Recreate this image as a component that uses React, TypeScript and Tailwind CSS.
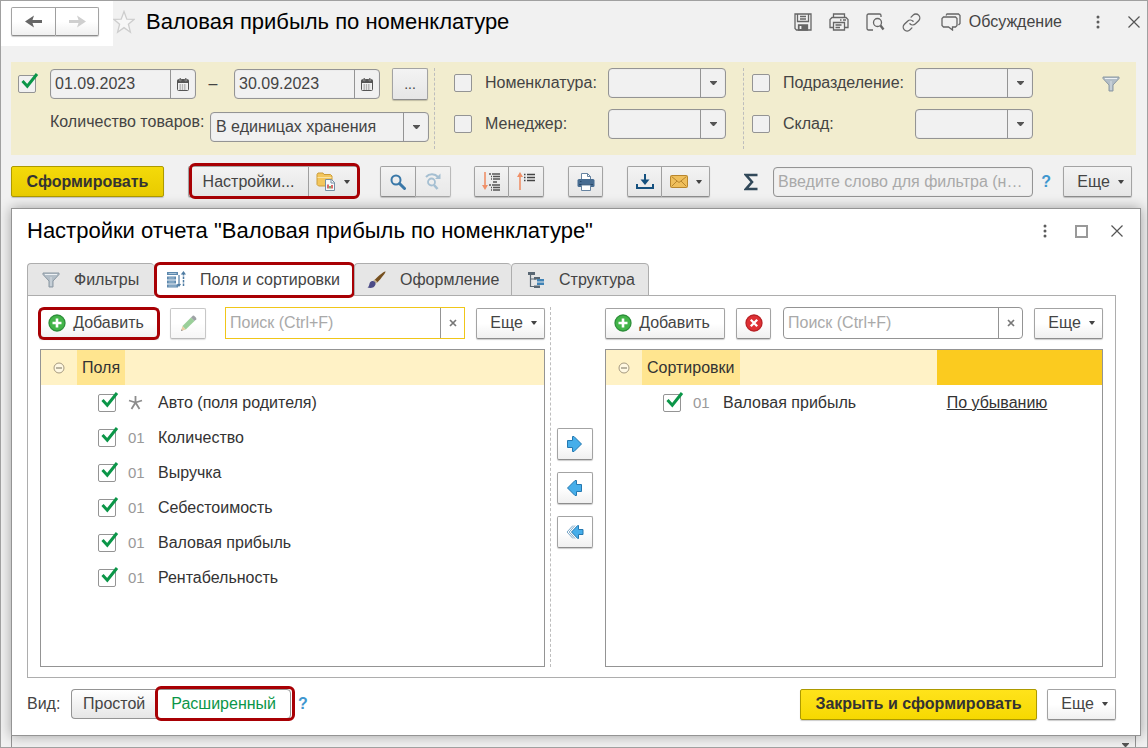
import { useState } from 'react';
import type { ReactNode } from 'react';
import clsx from 'clsx';

const buttonBase =
  'flex shrink-0 items-center justify-center border border-[#a3a3a3] border-b-[#8d8d8d] shadow-[0_1px_1px_#0003]';
const greyFill = 'bg-linear-to-b from-[#f3f3f3] to-[#e6e6e6]';
const whiteFill = 'bg-linear-to-b from-white from-50% to-[#f0f0f0]';

const fields = [
  { name: 'Авто (поля родителя)', auto: true },
  { name: 'Количество' },
  { name: 'Выручка' },
  { name: 'Себестоимость' },
  { name: 'Валовая прибыль' },
  { name: 'Рентабельность' },
];

const Caret = () => (
  <svg className="shrink-0" width="6" height="4" viewBox="0 0 6 4">
    <path d="M0 0h6L3.6 3.4H2.4z" fill="#444" />
  </svg>
);

const SelectCaret = () => (
  <svg width="7" height="4" viewBox="0 0 7 4">
    <path d="M0 0h7v.8L4 4H3L0 .8z" fill="#555" />
  </svg>
);

const Dots = () => (
  <svg width="4" height="14" viewBox="0 0 4 14" fill="#5c5c5c">
    <circle cx="2" cy="2" r="1.5" />
    <circle cx="2" cy="7" r="1.5" />
    <circle cx="2" cy="12" r="1.5" />
  </svg>
);

const Cross = () => (
  <svg width="12" height="12" viewBox="0 0 12 12" stroke="#555" strokeWidth="1.2">
    <path d="M.5.5l11 11M11.5.5l-11 11" />
  </svg>
);

const SmallCross = () => (
  <svg width="8" height="8" viewBox="0 0 8 8" stroke="#777" strokeWidth="1.7">
    <path d="M1 1l6 6M7 1L1 7" />
  </svg>
);

const ArrowIcon = ({ forward }: { forward?: boolean }) => (
  <svg width="17" height="13" viewBox="0 0 17 13">
    {forward ? (
      <path d="M0 5h9.5L8 .5l9 6-9 6L9.5 8H0z" fill="#cfcfcf" />
    ) : (
      <path d="M17 5H7.5L9 .5l-9 6 9 6L7.5 8H17z" fill="#666" />
    )}
  </svg>
);

const StarIcon = () => (
  <svg width="22" height="24" viewBox="0 0 22 24" fill="#f7f7f7" stroke="#cdcdcd" strokeWidth="1.3">
    <path d="M11 1.5l2.8 7.6 7.4.2-5.8 4.9 2 8L11 17.6l-6.4 4.6 2-8L.8 9.3l7.4-.2z" />
  </svg>
);

const CalendarIcon = () => (
  <svg width="12" height="13" viewBox="0 0 12 13">
    <rect x=".5" y="1.5" width="11" height="11" rx="1" fill="#f1f1f1" stroke="#555" />
    <path d="M.5 2h11v3H.5z" fill="#555" />
    <path d="M2.5 0H4v3H2.5zM8 0h1.5v3H8z" fill="#555" stroke="#ddd" strokeWidth=".3" />
    <path d="M2.5 7h7M2.5 9h7M2.5 11h7" stroke="#777" strokeDasharray="1.4 .9" />
  </svg>
);

const FunnelIcon = () => (
  <svg width="18" height="16" viewBox="0 0 18 16">
    <path d="M1 1h16v1.5L11 9v6H7V9L1 2.5z" fill="#b3bec7" stroke="#8b98a3" strokeLinejoin="round" />
    <path d="M3 2.5h12" stroke="#edf1f4" />
    <path d="M9 5v9" stroke="#d8dfe5" />
  </svg>
);

const SaveIcon = () => (
  <svg width="18" height="18" viewBox="0 0 18 18" fill="none" stroke="#666" strokeWidth="1.3">
    <path d="M1 1h16v16H2.5L1 15.5z" />
    <path d="M3.5 1v7.5h11V1M6 3.5h6M6 6h6" />
    <path d="M4.5 17v-5h9v5z" fill="#666" />
    <path d="M6.5 13v3" stroke="#f1f1f1" strokeWidth="1.8" />
  </svg>
);

const PrintOutlineIcon = () => (
  <svg width="20" height="18" viewBox="0 0 20 18" fill="none" stroke="#666" strokeWidth="1.3">
    <path d="M4.5 4.5V1h11v3.5M4.5 14.5H1v-8l2-2h14l2 2v8h-3.5" />
    <path d="M4.5 9.5h11V17h-11zM6.5 12h6M6.5 14.5H11M14 7h3M11 7h1.5" />
  </svg>
);

const PreviewIcon = () => (
  <svg width="19" height="18" viewBox="0 0 19 18" fill="none" stroke="#666" strokeWidth="1.3">
    <path d="M7 17H2.5A1.5 1.5 0 011 15.5v-13A1.5 1.5 0 012.5 1h11A1.5 1.5 0 0115 2.5V4" />
    <circle cx="11.5" cy="9.5" r="4" />
    <path d="M14.5 12.5l3 4" strokeWidth="2.4" />
  </svg>
);

const LinkIcon = () => (
  <svg width="19" height="19" viewBox="0 0 24 24" fill="none" stroke="#666" strokeWidth="1.7" strokeLinecap="round">
    <path d="M10 13.5a5 5 0 007 .2l4-4a4.900 4.900 0 00-7-7l-2.500 2.500" />
    <path d="M14 10.5a5 5 0 00-7-.2l-4 4a4.900 4.900 0 007 7l2.500-2.500" />
  </svg>
);

const ChatIcon = () => (
  <svg width="20" height="18" viewBox="0 0 20 18" fill="none" stroke="#666" strokeWidth="1.3">
    <path d="M5 2.5L6 1h11.5L19 2.5v8L17.5 12" />
    <path d="M2.5 4h12L16 5.5v7L14.5 14h-3v3l-4-3h-5L1 12.5v-7z" />
  </svg>
);

const FolderReportIcon = () => (
  <svg width="20" height="19" viewBox="0 0 20 19">
    <path d="M1 2.5L2 1h5l1 1.5h6.5L16 4v10H2.5L1 12.5z" fill="#f3c65c" stroke="#cb9c3a" />
    <path d="M1.5 5.5h14" stroke="#fbe3a2" />
    <path d="M9.5 7.5h6l3 3v8h-9z" fill="#f7fafc" stroke="#758ea3" />
    <path d="M15 7.5V11h3.5" fill="none" stroke="#758ea3" />
    <path d="M12 12.5v4M16 13v3.5" stroke="#cf3d3d" strokeWidth="1.5" />
    <path d="M14 14v2.5" stroke="#4b9d45" strokeWidth="1.5" />
  </svg>
);

const SearchIcon = () => (
  <svg width="16" height="16" viewBox="0 0 16 16" fill="none" stroke="#3a78a8">
    <circle cx="6" cy="6" r="4.5" strokeWidth="2" />
    <path d="M9.5 9.5l5 5" strokeWidth="3" strokeLinecap="round" />
  </svg>
);

const SearchAgainIcon = () => (
  <svg width="17" height="17" viewBox="0 0 17 17" fill="none" stroke="#86abc5">
    <circle cx="6.5" cy="9" r="3.5" strokeWidth="1.8" />
    <path d="M9 12l3.5 4" strokeWidth="2.5" />
    <path d="M1 4c3.5-4 9-3.5 12 0" strokeWidth="2" />
    <path d="M15.5.5V6H10z" fill="#86abc5" stroke="none" />
  </svg>
);

const ExpandIcon = () => (
  <svg width="19" height="19" viewBox="0 0 19 19">
    <path d="M3 0v15" stroke="#ef9068" strokeWidth="1.6" />
    <path d="M0 13h6l-3 5z" fill="#ef9068" />
    <path
      d="M7 2h2M10 2h8M9 4.5h1M11 4.5h7M9 7h1M11 7h7M11 10h4M7 13h2M10 13h8M9 15.5h1M11 15.5h7M9 18h1M11 18h7"
      stroke="#555"
      strokeWidth="1.3"
    />
  </svg>
);

const CollapseIcon = () => (
  <svg width="19" height="19" viewBox="0 0 19 19">
    <path d="M3 4v14" stroke="#ef9068" strokeWidth="1.6" />
    <path d="M0 5h6L3 0z" fill="#ef9068" />
    <path d="M7 2.5h1.5M10 2.5h8M7 5.5h1.5M10 5.5h8M7 8.5h1.5M10 8.5h8" stroke="#444" strokeWidth="1.3" />
  </svg>
);

const PrintIcon = () => (
  <svg width="18" height="18" viewBox="0 0 18 18">
    <path d="M4.5 7V.5h6l3 3V7" fill="#fff" stroke="#6683a0" />
    <path d="M10.5.5v3h3" fill="none" stroke="#6683a0" />
    <rect x=".5" y="6" width="17" height="8" rx="1.5" fill="#476c91" />
    <path d="M3 8.5h1.5M2 11.5h14" stroke="#294a6b" />
    <path d="M4.5 12h9v5.5h-9z" fill="#fff" stroke="#6683a0" />
  </svg>
);

const DownloadIcon = () => (
  <svg width="18" height="16" viewBox="0 0 18 16">
    <path d="M9 0v7" stroke="#14507e" strokeWidth="2" />
    <path d="M4.5 5.5h9L9 11z" fill="#14507e" />
    <path d="M1 10v4h16v-4" fill="none" stroke="#14507e" strokeWidth="2" />
  </svg>
);

const MailIcon = () => (
  <svg width="18" height="13" viewBox="0 0 18 13" stroke="#b8862d">
    <rect x=".5" y=".5" width="17" height="12" rx="1" fill="#efbf5c" />
    <path d="M1.5 1.5l7.5 6 7.5-6M1.5 11.5L7 6M16.5 11.5L11 6" fill="none" />
  </svg>
);

const SigmaIcon = () => (
  <svg width="14" height="18" viewBox="0 0 14 18" fill="none" stroke="#32495a" strokeWidth="2.6">
    <path d="M13.5 2H2l6 7-6 7h11.5" />
  </svg>
);

const FieldsIcon = () => (
  <svg className="shrink-0" width="19" height="17" viewBox="0 0 19 17">
    <path d="M0 1h11v3H0zM0 5.5h9v3H0zM0 9.5h9v3H0zM0 13.5h11v3H0z" fill="#5c88ad" />
    <path d="M1.5 2.5h8M1.5 7h6M1.5 11h6M1.5 15h8" stroke="#a9c3d8" />
    <path d="M12 4v11M10.5 13l1.5 2 1.5-2" fill="none" stroke="#4e7ba2" strokeWidth="1.2" />
    <path d="M16.5 2v14" fill="none" stroke="#4e7ba2" strokeWidth="1.5" strokeDasharray="2.5 1" />
    <path d="M13.8 3.5L16.5 0 19 3.5z" fill="#4e7ba2" />
  </svg>
);

const BrushIcon = () => (
  <svg className="shrink-0" width="19" height="18" viewBox="0 0 19 18">
    <path d="M18.5.5c.8.8-7 10-8.5 11L7.5 9C9 7 17.500-.5 18.5.5z" fill="#76501f" />
    <path d="M7.5 8.5l3 2.5L9 12.5 6 10z" fill="#c5b390" />
    <path d="M6 10c2 .2 3 2 2.5 3.500C7.500 17 3.500 17.500.5 16.500c2-1.500 1.500-3 2.200-4.500C3.400 10.500 4.500 10 6 10z" fill="#4c4c87" />
  </svg>
);

const StructureIcon = () => (
  <svg className="shrink-0" width="17" height="18" viewBox="0 0 17 18">
    <path d="M0 1h7v3H0z" fill="#596773" />
    <path d="M2.5 4v11.5H8M2.5 8H8" fill="none" stroke="#596773" strokeWidth="1.2" />
    <path d="M6 6h6v2.5H6zM6 14.5h6V17H6z" fill="#596773" />
    <path d="M9 8h7v2.5H9zM9 11.5h7V14H9z" fill="#4083b6" />
  </svg>
);

const PlusIcon = () => (
  <svg className="shrink-0" width="18" height="18" viewBox="0 0 18 18">
    <circle cx="9" cy="9" r="8" fill="#43b549" stroke="#2d8f3a" strokeWidth="1.3" />
    <path d="M9 4.5v9M4.5 9h9" stroke="#fff" strokeWidth="2.6" />
  </svg>
);

const DeleteIcon = () => (
  <svg width="18" height="18" viewBox="0 0 18 18">
    <circle cx="9" cy="9" r="8" fill="#de3034" stroke="#b92226" strokeWidth="1.3" />
    <path d="M5.8 5.8l6.4 6.4M12.2 5.8l-6.4 6.4" stroke="#fff" strokeWidth="2.3" />
  </svg>
);

const PencilIcon = () => (
  <svg width="17" height="17" viewBox="0 0 17 17">
    <path d="M1 16l1.5-5 3.3 3.5z" fill="#d9ac66" />
    <path d="M1 16l.5-1.8 1.3 1.3z" fill="#444" />
    <path d="M2.5 11L11 2.5 14.5 6l-8.700 8.500z" fill="#58b056" />
    <path d="M11 2.5L12.8.7c.8-.8 4.2 2.5 3.5 3.500L14.500 6z" fill="#5f656b" />
  </svg>
);

const MoveIcon = ({ kind }: { kind: 'right' | 'left' | 'all' }) => (
  <svg width="18" height="18" viewBox="0 0 18 18" fill="#46aeea" stroke="#2478b0" strokeLinejoin="round">
    {kind === 'right' && <path d="M1.5 5.5h5v-4H8L15.5 9 8 16.5H6.5v-4h-5z" />}
    {kind === 'left' && <path d="M15.5 5.5h-5v-4H9L1.5 9 9 16.5h1.5v-4h5z" />}
    {kind === 'all' && (
      <>
        <path d="M17 6.5h-4.5v-4h-.8L5.5 9l6.2 6.5h.8v-4H17z" />
        <path d="M7 2.5L1 9l6 6.5M9 2.5L3.2 9 9 15.5" fill="none" stroke="#6a9cc0" strokeWidth=".9" />
      </>
    )}
  </svg>
);

const CollapseNodeIcon = () => (
  <svg width="12" height="12" viewBox="0 0 12 12" fill="#fff8e2" stroke="#a69a80">
    <circle cx="6" cy="6" r="5" />
    <path d="M3 6h6" stroke="#77705f" />
  </svg>
);

const AutoIcon = () => (
  <svg width="15" height="15" viewBox="0 0 15 15" stroke="#8c8c8c" strokeWidth="1.8">
    <path d="M7.5 1v6.5M1 5.5l6.5 2M14 5.5l-6.5 2M3.5 14l4-6.5M11.5 14l-4-6.5" />
  </svg>
);

/* red frame drawn over the control the reader should press */
const Highlight = ({ className }: { className: string }) => (
  <span className={clsx('pointer-events-none absolute rounded-md border-3 border-[#a80004]', className)} />
);

const Tick = ({ checked, label }: { checked?: boolean; label?: string }) => (
  <span className="relative flex size-[18px] shrink-0">
    <input
      type="checkbox"
      defaultChecked={checked}
      aria-label={label}
      className={clsx(
        'peer size-[18px] appearance-none rounded-xs border border-[#949494]',
        label ? 'bg-[#f1f1f1]' : 'bg-white',
      )}
    />
    <svg
      className="pointer-events-none absolute -top-[2px] left-[3px] hidden peer-checked:block"
      width="18"
      height="16"
      viewBox="0 0 18 16"
      fill="none"
      stroke="#0b9648"
      strokeWidth="3"
    >
      <path d="M1.5 8l4.8 5.2L16 1" />
    </svg>
  </span>
);

const DateField = ({ label, value }: { label: string; value: string }) => (
  <div className="flex h-[30px] w-[146px] rounded-sm border border-[#949494] bg-[#f1f1f1] shadow-[inset_0_0_1px_#0003]">
    <input aria-label={label} defaultValue={value} className="w-0 grow px-1 outline-none" />
    <button aria-label="Выбрать дату" className="flex w-[25px] items-center justify-center border-l border-[#949494]">
      <CalendarIcon />
    </button>
  </div>
);

const Combo = ({ id, className, children }: { id: string; className?: string; children?: ReactNode }) => (
  <div className={clsx('relative h-[30px] shrink-0', className)}>
    <select
      id={id}
      className="size-full appearance-none rounded-sm border border-[#949494] bg-[#f1f1f1] pr-7 pl-[5px] shadow-[inset_0_0_1px_#0003]"
    >
      {children}
    </select>
    <span className="pointer-events-none absolute inset-y-0 right-0 flex w-[26px] items-center justify-center border-l border-[#949494]">
      <SelectCaret />
    </span>
  </div>
);

const FilterRow = ({ id, label, labelWidth }: { id: string; label: string; labelWidth: string }) => (
  <div className="flex h-[30px] items-center">
    <Tick label={label} />
    <label htmlFor={id} className={clsx('ml-[13px] shrink-0', labelWidth)}>
      {label}
    </label>
    <Combo id={id} className="w-[118px]" />
  </div>
);

const MoreButton = ({ fill }: { fill: string }) => (
  <button className={clsx(buttonBase, fill, 'h-[31px] w-[69px] gap-2 rounded-xs pl-1.5')}>
    Еще
    <Caret />
  </button>
);

const SearchBox = ({ label, active }: { label: string; active?: boolean }) => (
  <div className={clsx('flex h-8 w-[240px] border bg-white', active ? 'border-[#f0c619]' : 'rounded-sm border-[#949494]')}>
    <input
      aria-label={label}
      placeholder="Поиск (Ctrl+F)"
      className="w-0 grow px-1 outline-none placeholder:text-[#a9a9a9]"
    />
    <button aria-label="Очистить" className="flex w-6 items-center justify-center border-l border-[#949494]">
      <SmallCross />
    </button>
  </div>
);

const AddButton = () => (
  <button className={clsx(buttonBase, whiteFill, 'h-[31px] w-[120px] gap-[7px] rounded-xs pr-1.5')}>
    <PlusIcon />
    Добавить
  </button>
);

const TreeHeader = ({ title, children }: { title: string; children?: ReactNode }) => (
  <thead>
    <tr className="h-[35px] bg-[#fff2c6]">
      <th className="p-0 font-normal">
        <div className="flex h-[35px] items-center">
          <button aria-label="Свернуть" className="flex w-9 justify-center">
            <CollapseNodeIcon />
          </button>
          <span className="flex h-full items-center bg-[#ffe58f] px-[5px]">{title}</span>
        </div>
      </th>
      {children}
    </tr>
  </thead>
);

const FieldLabel = ({ name, auto }: { name: string; auto?: boolean }) => (
  <label className="flex h-[35px] items-center pl-[57px]">
    <Tick checked />
    <span className="ml-3 flex w-[30px] items-center text-[15px] text-[#999]">{auto ? <AutoIcon /> : '01'}</span>
    {name}
  </label>
);

const tabs = [
  { name: 'Фильтры', icon: <FunnelIcon />, className: 'w-[127px] pl-3.5 gap-3.5' },
  { name: 'Поля и сортировки', icon: <FieldsIcon />, className: 'w-[200px] pl-3 gap-3.5' },
  { name: 'Оформление', icon: <BrushIcon />, className: 'w-[157px] pl-3 gap-3.5' },
  { name: 'Структура', icon: <StructureIcon />, className: 'w-[138px] pl-4 gap-3.5' },
];

const App = () => {
  const [activeTab, setActiveTab] = useState('Поля и сортировки');
  const [view, setView] = useState('Расширенный');

  return (
    <div className="flex min-h-screen flex-col overflow-hidden border border-[#a0a0a0] bg-[#f1f1f1] font-['Liberation_Sans',Arial,sans-serif] text-base leading-5 text-[#444]">
      <header className="flex h-[61px] items-start">
        <div className="flex h-[45px] w-28 shrink-0 bg-white pt-1.5 pl-2.5">
          <button aria-label="Назад" className={clsx(buttonBase, whiteFill, 'h-[29px] w-[45px] rounded-l-xs')}>
            <ArrowIcon />
          </button>
          <button aria-label="Вперед" className={clsx(buttonBase, whiteFill, 'h-[29px] w-[43px] rounded-r-xs border-l-0')}>
            <ArrowIcon forward />
          </button>
        </div>
        <div className="flex h-[42px] grow items-center">
          <button aria-label="В избранное"><StarIcon /></button>
          <h1 className="ml-[11px] grow text-[22px] leading-7 text-black">Валовая прибыль по номенклатуре</h1>
          <div className="flex items-center gap-[17px]">
            <button aria-label="Сохранить"><SaveIcon /></button>
            <button aria-label="Печать"><PrintOutlineIcon /></button>
            <button aria-label="Просмотр"><PreviewIcon /></button>
            <button aria-label="Ссылка"><LinkIcon /></button>
          </div>
          <button className="ml-5 flex items-center gap-2">
            <ChatIcon />
            Обсуждение
          </button>
          <button aria-label="Меню" className="ml-[34px]"><Dots /></button>
          <button aria-label="Закрыть" className="mr-[7px] ml-7"><Cross /></button>
        </div>
      </header>

      <section className="mr-[11px] ml-2.5 flex h-[93px] shrink-0 items-start bg-[#f2edcf] pt-1.5">
        <div className="flex w-[423px] shrink-0 flex-col gap-3 pl-[7px]">
          <div className="flex h-8 items-center">
            <Tick checked label="Период" />
            <div className="ml-3.5 flex items-center">
              <DateField label="Начало периода" value="01.09.2023" />
              <span className="w-[38px] pr-1 text-center">–</span>
              <DateField label="Конец периода" value="30.09.2023" />
            </div>
            <button className={clsx(buttonBase, greyFill, 'ml-3 h-8 w-9 rounded-xs text-sm')}>...</button>
          </div>
          <div className="flex items-start pl-8">
            <label htmlFor="units" className="w-40 shrink-0 whitespace-nowrap">Количество товаров:</label>
            <Combo id="units" className="w-[219px]">
              <option>В единицах хранения</option>
            </Combo>
          </div>
        </div>
        <div className="flex h-[81px] w-[309px] shrink-0 flex-col gap-[11px] border-l border-dashed border-[#bdbdbd] pl-[19px]">
          <FilterRow id="item" label="Номенклатура:" labelWidth="w-[123px]" />
          <FilterRow id="manager" label="Менеджер:" labelWidth="w-[123px]" />
        </div>
        <div className="flex h-[81px] grow flex-col gap-[11px] border-l border-dashed border-[#bdbdbd] pl-2">
          <FilterRow id="department" label="Подразделение:" labelWidth="w-[132px]" />
          <FilterRow id="warehouse" label="Склад:" labelWidth="w-[132px]" />
        </div>
        <button aria-label="Фильтр" className="mt-2 mr-4"><FunnelIcon /></button>
      </section>

      <div className="my-[11px] mr-[15px] ml-2.5 flex h-[31px] shrink-0 items-center">
        <button className="h-[31px] w-[153px] shrink-0 rounded-xs border border-[#ad9a00] bg-linear-to-b from-[#f4da0a] to-[#e8cb00] font-bold text-[#333] shadow-[0_1px_1px_#0003]">
          Сформировать
        </button>
        <div className="relative ml-6 flex">
          <button className={clsx(buttonBase, greyFill, 'h-[31px] w-[121px] rounded-l-xs')}>Настройки...</button>
          <button aria-label="Варианты отчета" className={clsx(buttonBase, greyFill, 'h-[31px] w-[49px] gap-2 rounded-r-xs border-l-0')}>
            <FolderReportIcon />
            <Caret />
          </button>
          <Highlight className="-top-[3px] -right-[2px] -bottom-[2px] left-[1px]" />
        </div>
        <div className="ml-[22px] flex">
          <button aria-label="Найти" className={clsx(buttonBase, greyFill, 'h-[31px] w-9 rounded-l-xs')}><SearchIcon /></button>
          <button aria-label="Найти далее" className={clsx(buttonBase, greyFill, 'h-[31px] w-[35px] rounded-r-xs border-l-0 opacity-70')}><SearchAgainIcon /></button>
        </div>
        <div className="ml-[23px] flex">
          <button aria-label="Развернуть группы" className={clsx(buttonBase, greyFill, 'h-[31px] w-[35px] rounded-l-xs')}><ExpandIcon /></button>
          <button aria-label="Свернуть группы" className={clsx(buttonBase, greyFill, 'h-[31px] w-[35px] rounded-r-xs border-l-0')}><CollapseIcon /></button>
        </div>
        <button aria-label="Печать отчета" className={clsx(buttonBase, greyFill, 'ml-6 h-[31px] w-[35px] rounded-xs')}><PrintIcon /></button>
        <div className="ml-6 flex">
          <button aria-label="Сохранить в файл" className={clsx(buttonBase, greyFill, 'h-[31px] w-[35px] rounded-l-xs')}><DownloadIcon /></button>
          <button aria-label="Отправить" className={clsx(buttonBase, greyFill, 'h-[31px] w-12 gap-2 rounded-r-xs border-l-0')}>
            <MailIcon />
            <Caret />
          </button>
        </div>
        <button aria-label="Сумма" className="ml-[34px] shrink-0"><SigmaIcon /></button>
        <input
          aria-label="Фильтр по слову"
          placeholder="Введите слово для фильтра (название товара)"
          className="ml-[15px] h-[30px] w-0 grow rounded-sm border border-[#949494] px-1 pr-2 text-ellipsis shadow-[inset_0_0_1px_#0003] placeholder:text-[#a9a9a9]"
        />
        <button className="mx-2 font-bold text-[#3f97cf]">?</button>
        <div className="ml-1"><MoreButton fill={greyFill} /></div>
      </div>

      <main className="relative z-10 mr-1.5 ml-2.5 flex grow flex-col border border-[#949494] bg-white pr-6 pb-[15px] pl-[15px] shadow-[0_0_12px_#0005]">
        <div className="flex h-[54px] shrink-0 items-start pt-2">
          <h2 className="grow text-[22px] leading-7 text-black">Настройки отчета "Валовая прибыль по номенклатуре"</h2>
          <div className="-mr-[7px] flex h-7 items-center">
            <button aria-label="Меню настроек"><Dots /></button>
            <button aria-label="Развернуть" className="ml-7 size-[13px] border-2 border-[#999]" />
            <button aria-label="Закрыть настройки" className="ml-[23px]"><Cross /></button>
          </div>
        </div>

        <div role="tablist" className="relative z-10 -mb-px flex h-[33px] shrink-0">
          {tabs.map((tab) => (
            <button
              key={tab.name}
              role="tab"
              aria-selected={tab.name === activeTab}
              onClick={() => setActiveTab(tab.name)}
              className={clsx(
                'relative flex items-center rounded-t-sm border border-r-0 border-[#adadad] whitespace-nowrap last:border-r',
                tab.name === activeTab ? 'border-b-white bg-white' : 'bg-[#e6e6e6]',
                tab.className,
              )}
            >
              {tab.icon}
              {tab.name}
              {tab.name === activeTab && <Highlight className="-inset-x-[1px] -top-[2px] -bottom-[3px]" />}
            </button>
          ))}
        </div>

        <div className="grid grow grid-cols-[505fr_60px_498fr] border border-[#adadad] px-3 pt-[11px] pb-2.5">
          <div className="flex min-w-0 flex-col gap-2.5">
            <div className="flex h-8 items-center">
              <div className="relative -ml-px">
                <AddButton />
                <Highlight className="-inset-x-[1px] -top-[1px] -bottom-[1px]" />
              </div>
              <button aria-label="Изменить" className={clsx(buttonBase, whiteFill, 'ml-[11px] h-[31px] w-9 rounded-xs opacity-60')}><PencilIcon /></button>
              <div className="mr-auto ml-[19px]"><SearchBox label="Поиск поля" active /></div>
              <MoreButton fill={whiteFill} />
            </div>
            <div className="grow border border-[#949494]">
              <table className="w-full text-[#333]">
                <TreeHeader title="Поля" />
                <tbody>
                  {fields.map((field) => (
                    <tr key={field.name}>
                      <td className="p-0"><FieldLabel {...field} /></td>
                    </tr>
                  ))}
                </tbody>
              </table>
            </div>
          </div>

          <div className="ml-[5px] flex flex-col gap-3 border-l border-dashed border-[#bdbdbd] pt-[121px] pl-1.5">
            <button aria-label="Добавить в сортировки" className={clsx(buttonBase, whiteFill, 'h-8 w-9 rounded-xs')}><MoveIcon kind="right" /></button>
            <button aria-label="Убрать из сортировок" className={clsx(buttonBase, whiteFill, 'h-8 w-9 rounded-xs')}><MoveIcon kind="left" /></button>
            <button aria-label="Убрать все" className={clsx(buttonBase, whiteFill, 'h-8 w-9 rounded-xs')}><MoveIcon kind="all" /></button>
          </div>

          <div className="flex min-w-0 flex-col gap-2.5">
            <div className="flex h-8 items-center">
              <AddButton />
              <button aria-label="Удалить" className={clsx(buttonBase, whiteFill, 'ml-[11px] h-[31px] w-[35px] rounded-xs')}><DeleteIcon /></button>
              <div className="mr-auto ml-3"><SearchBox label="Поиск сортировки" /></div>
              <MoreButton fill={whiteFill} />
            </div>
            <div className="grow border border-[#949494]">
              <table className="w-full text-[#333]">
                <TreeHeader title="Сортировки">
                  <th className="w-1/3 bg-[#fbcb1f] p-0" aria-label="Направление" />
                </TreeHeader>
                <tbody>
                  <tr>
                    <td className="p-0"><FieldLabel name="Валовая прибыль" /></td>
                    <td className="p-0 pl-2.5"><a href="#" className="underline">По убыванию</a></td>
                  </tr>
                </tbody>
              </table>
            </div>
          </div>
        </div>

        <div className="mt-2.5 flex h-8 shrink-0 items-center">
          <span className="w-11">Вид:</span>
          <div className="flex">
            {['Простой', 'Расширенный'].map((name) => (
              <button
                key={name}
                aria-pressed={view === name}
                onClick={() => setView(name)}
                className={clsx(
                  'relative h-[30px] border border-[#949494] px-[11px] first:rounded-l-sm first:border-r-0 last:rounded-r-sm last:px-3.5',
                  view === name ? 'bg-white text-[#0b9648]' : 'bg-linear-to-b from-white to-[#e6e6e6]',
                )}
              >
                {name}
                {view === name && <Highlight className="-top-[4px] -right-[5px] -bottom-[3px] -left-[2px]" />}
              </button>
            ))}
          </div>
          <button className="ml-[7px] font-bold text-[#3f97cf]">?</button>
          <button className="mr-2.5 ml-auto h-[31px] w-[237px] rounded-xs border border-[#ad9a00] bg-linear-to-b from-[#ffe31a] to-[#f6d900] font-bold text-[#333] shadow-[0_1px_1px_#0003]">
            Закрыть и сформировать
          </button>
          <MoreButton fill={whiteFill} />
        </div>
      </main>

      <div className="mr-[11px] ml-2.5 flex h-[11px] shrink-0 items-end justify-end overflow-hidden border-x border-[#949494] pr-1.5">
        <SelectCaret />
      </div>
    </div>
  );
};

export default App;
